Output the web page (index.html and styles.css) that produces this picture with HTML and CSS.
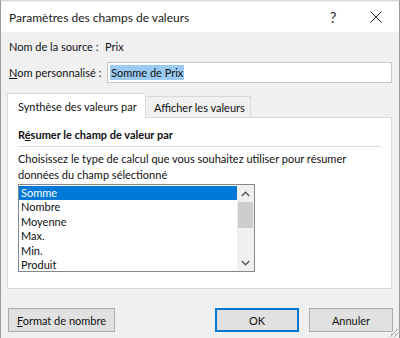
FILE: index.html
```html
<!DOCTYPE html>
<html>
<head>
    <title>Paramètres des champs de valeurs</title>
    <link rel="stylesheet" href="styles.css">
</head>
<body>
    <div class="window">
        <div class="titlebar">
            <span class="title">Paramètres des champs de valeurs</span>
            <span class="help">?</span>
            <span class="close">
                <svg width="12" height="12" viewBox="0 0 12 12"><path d="M0.5 0.5 L11.5 11.5 M11.5 0.5 L0.5 11.5" stroke="#222" stroke-width="1"/></svg>
            </span>
        </div>

        <div class="content">
            <div class="row source-row">
                <span class="label">Nom de la source :</span>
                <span class="value">Prix</span>
            </div>
            <div class="row name-row">
                <label class="label"><u>N</u>om personnalisé :</label>
                <div class="input"><span class="selected-text">Somme de Prix</span></div>
            </div>

            <div class="tabs">
                <div class="tab active">Synthèse des valeurs par</div>
                <div class="tab">Afficher les valeurs</div>
            </div>
            <div class="panel">
                <div class="section-title">R<u>é</u>sumer le champ de valeur par</div>
                <div class="separator"></div>
                <p class="hint">Choisissez le type de calcul que vous souhaitez utiliser pour résumer données du champ sélectionné</p>
                <div class="listbox">
                    <ul class="items">
                        <li class="selected">Somme</li>
                        <li>Nombre</li>
                        <li>Moyenne</li>
                        <li>Max.</li>
                        <li>Min.</li>
                        <li>Produit</li>
                    </ul>
                    <div class="scrollbar">
                        <div class="arrow">
                            <svg width="9" height="6" viewBox="0 0 9 6"><path d="M0.8 5 L4.5 1.3 L8.2 5" fill="none" stroke="#555" stroke-width="1.4"/></svg>
                        </div>
                        <div class="thumb"></div>
                        <div class="track"></div>
                        <div class="arrow">
                            <svg width="9" height="6" viewBox="0 0 9 6"><path d="M0.8 1 L4.5 4.7 L8.2 1" fill="none" stroke="#555" stroke-width="1.4"/></svg>
                        </div>
                    </div>
                </div>
            </div>

            <div class="footer">
                <button class="button format"><u>F</u>ormat de nombre</button>
                <div class="spacer"></div>
                <button class="button ok">OK</button>
                <button class="button">Annuler</button>
            </div>
        </div>
        <div class="grip"></div>
    </div>
</body>
</html>
```

FILE: styles.css
```css
body {
    margin: 0;
    font-family: 'Lato', 'Noto Sans', sans-serif;
    font-size: 11px;
    color: #111;
    background: #f0f0f0;
    white-space: nowrap;
}
.window {
    position: relative;
    width: 398px;
    height: 337px;
    border: 1px solid #9b9b9b;
    border-top-color: #d8d8d8;
    border-bottom: none;
    background: #f0f0f0;
    overflow: hidden;
}
.titlebar {
    display: flex;
    align-items: center;
    height: 30px;
    margin-top: 1px;
    background: #fff;
}
.title {
    flex: 1;
    padding-left: 8px;
    font-size: 12px;
    color: #1a1a1a;
}
.help {
    width: 20px;
    font-size: 15px;
    color: #333;
    text-align: center;
    margin-right: 27px;
}
.close {
    display: flex;
    width: 14px;
    margin-right: 15px;
}
.content {
    padding: 0 6px 0 6px;
}
.row {
    display: flex;
    align-items: center;
}
.label {
    flex-shrink: 0;
}
.source-row {
    height: 28px;
    padding-left: 2px;
}
.source-row .label {
    width: 96px;
}
.name-row {
    height: 24px;
    padding-left: 2px;
}
.name-row .label {
    width: 98px;
}
.input {
    flex: 1;
    height: 19px;
    margin-right: 1px;
    border: 1px solid #c8c8c8;
    background: #fff;
    display: flex;
    align-items: center;
    padding-left: 2px;
}
.selected-text {
    background: #9bcbf2;
    padding: 1px 1px;
}
.tabs {
    display: flex;
    align-items: flex-end;
    margin-top: 9px;
    height: 24px;
}
.tab {
    height: 20px;
    padding: 0 8px;
    border: 1px solid #d9d9d9;
    border-bottom: none;
    background: #f0f0f0;
    display: flex;
    align-items: center;
}
.tab.active {
    height: 24px;
    width: 127px;
    padding: 0 0 0 10px;
    background: #fff;
    border-right: none;
    position: relative;
    top: 1px;
}
.tab:not(.active) {
    width: 88px;
}
.panel {
    height: 170px;
    margin-right: 1px;
    border: 1px solid #d9d9d9;
    background: #fff;
    padding: 0 10px;
}
.section-title {
    font-weight: bold;
    margin-top: 10px;
    height: 15px;
}
.separator {
    height: 1px;
    background: #dcdcdc;
    margin: 3px 0 4px 0;
}
.hint {
    margin: 0;
    line-height: 16px;
    width: 350px;
    white-space: normal;
}
.listbox {
    display: flex;
    width: 235px;
    height: 86px;
    margin-top: 1px;
    border: 1px solid #828790;
    background: #fff;
}
.items {
    flex: 1;
    list-style: none;
    margin: 0;
    padding: 1px 0 0 0;
}
.items li {
    height: 14.4px;
    line-height: 14px;
    padding-left: 2px;
}
.items li.selected {
    background: #0078d7;
    color: #fff;
}
.scrollbar {
    width: 17px;
    background: #f0f0f0;
    display: flex;
    flex-direction: column;
}
.arrow {
    height: 17px;
    display: flex;
    align-items: center;
    justify-content: center;
}
.thumb {
    height: 26px;
    margin: 0 1px;
    background: #cdcdcd;
}
.track {
    flex: 1;
}
.footer {
    display: flex;
    margin-top: 19px;
    padding-left: 1px;
    gap: 10px;
}
.spacer {
    flex: 1;
}
.button {
    height: 24px;
    width: 84px;
    font-family: inherit;
    font-size: 11px;
    color: #111;
    background: #e1e1e1;
    border: 1px solid #adadad;
    padding: 0;
}
.button.format {
    width: 107px;
}
.button.ok {
    border: 1px solid #0078d7;
    box-shadow: inset 0 0 0 1px #0078d7;
}
.grip {
    position: absolute;
    right: 1px;
    bottom: 1px;
    width: 10px;
    height: 10px;
    background: linear-gradient(135deg, transparent 55%, #b0b0b0 55%, #b0b0b0 62%, transparent 62%, transparent 75%, #b0b0b0 75%, #b0b0b0 82%, transparent 82%);
}
```
